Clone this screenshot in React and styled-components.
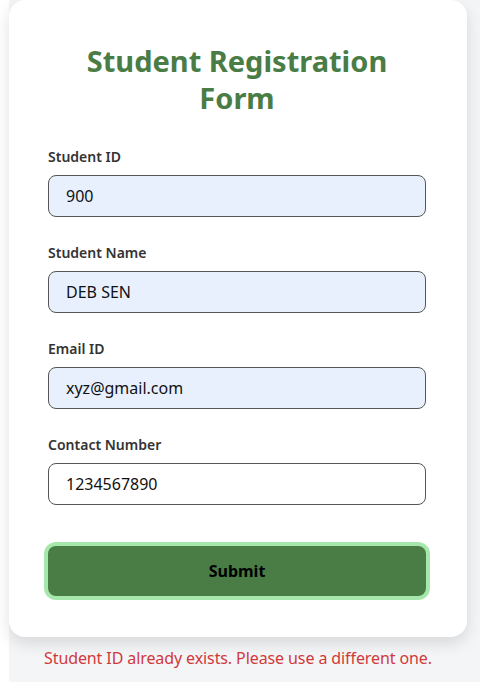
import styled, { createGlobalStyle } from "styled-components";

const GlobalStyle = createGlobalStyle`
  html, body {
    margin: 0;
    padding: 0;
    background: #ffffff;
    font-family: "Noto Sans", "Open Sans", sans-serif;
  }
`;

const fields = [
  { label: "Student ID", value: "900", filled: true },
  { label: "Student Name", value: "DEB SEN", filled: true },
  { label: "Email ID", value: "xyz@gmail.com", filled: true },
  { label: "Contact Number", value: "1234567890", filled: false },
];

export default function App() {
  return (
    <>
      <GlobalStyle />
      <Page>
        <Card>
          <Title>Student Registration Form</Title>
          <Fields>
            {fields.map((f) => (
              <Field key={f.label}>
                <Label>{f.label}</Label>
                <Input $filled={f.filled} defaultValue={f.value} />
              </Field>
            ))}
          </Fields>
          <SubmitButton>Submit</SubmitButton>
        </Card>
        <ErrorText>Student ID already exists. Please use a different one.</ErrorText>
      </Page>
    </>
  );
}

const Page = styled.div`
  margin-left: 9px;
  background: #f4f5f7;
  min-height: 682px;
  width: 480px;
`;

const Card = styled.div`
  width: 458px;
  box-sizing: border-box;
  background: #ffffff;
  border-radius: 16px;
  box-shadow: 0 6px 16px rgba(0, 0, 0, 0.12);
  padding: 42px 41px 41px 39px;
  display: flex;
  flex-direction: column;
`;

const Title = styled.h2`
  margin: 0 0 31px;
  padding: 0 30px;
  text-align: center;
  color: #4a7c45;
  font-size: 29px;
  line-height: 37px;
  font-weight: 700;
`;

const Fields = styled.div`
  display: flex;
  flex-direction: column;
  gap: 26px;
`;

const Field = styled.div`
  display: flex;
  flex-direction: column;
  gap: 8px;
`;

const Label = styled.label`
  font-size: 14px;
  line-height: 20px;
  font-weight: 600;
  color: #333;
`;

const Input = styled.input`
  box-sizing: border-box;
  height: 42px;
  width: 100%;
  padding: 0 17px;
  font-family: inherit;
  font-size: 16px;
  color: #111;
  border: 1px solid #555;
  border-radius: 8px;
  background: ${(p) => (p.$filled ? "#e8f0fe" : "#ffffff")};
  outline: none;
`;

const SubmitButton = styled.button`
  margin-top: 41px;
  height: 50px;
  width: 100%;
  border: none;
  border-radius: 8px;
  background: #4a7c45;
  box-shadow: 0 0 0 4px #a6e8ab;
  font-family: inherit;
  font-size: 16px;
  font-weight: 700;
  color: #000;
  cursor: pointer;
`;

const ErrorText = styled.p`
  margin: 10px 0 0;
  width: 458px;
  text-align: center;
  font-size: 16px;
  line-height: 22px;
  letter-spacing: -0.1px;
  color: #d03a3a;
`;
